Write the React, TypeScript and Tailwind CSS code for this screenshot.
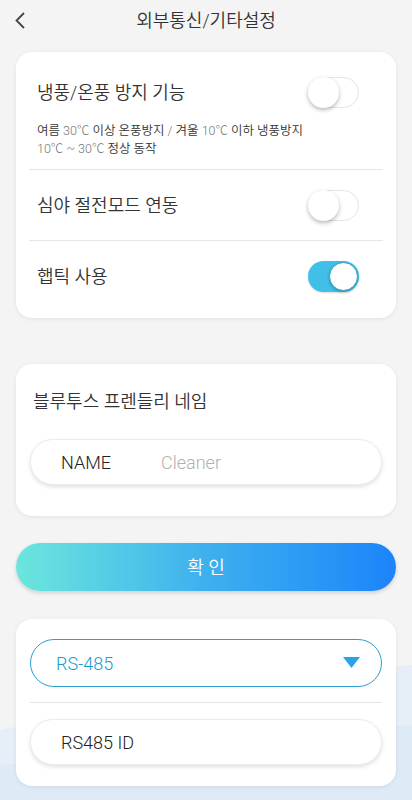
import React from "react";

const KR = { fontFamily: 'Roboto, "Noto Sans CJK KR", sans-serif' };

function Toggle({ on }: { on: boolean }) {
  if (on) {
    return (
      <div className="relative h-[31px] w-[51px] rounded-full bg-[#41bfe6] shadow-[0_1px_2px_rgba(0,0,0,0.15)]">
        <div className="absolute right-[1px] top-[1px] h-[29px] w-[29px] rounded-full border border-[#2e9fbf] bg-white shadow-[0_1px_3px_rgba(0,0,0,0.25)]" />
      </div>
    );
  }
  return (
    <div className="relative h-[31px] w-[51px] rounded-full border border-[#e4e4e4] bg-white">
      <div className="absolute left-[-1px] top-[-1px] h-[31px] w-[31px] rounded-full bg-white shadow-[0_2px_4px_rgba(0,0,0,0.28)]" />
    </div>
  );
}

export default function App() {
  return (
    <div className="relative min-h-[800px] w-[412px] overflow-hidden bg-[#f4f4f4]" style={KR}>
      <svg className="absolute bottom-0 left-0" width="412" height="140" viewBox="0 0 412 140">
        <path d="M0 70 C 120 45, 260 15, 412 5 L412 140 L0 140 Z" fill="#e6eff8" />
        <path d="M0 105 C 140 90, 280 75, 412 65 L412 140 L0 140 Z" fill="#deeaf6" />
      </svg>

      <div className="relative flex flex-col">
        {/* header */}
        <div className="relative flex h-[40px] items-center justify-center">
          <svg className="absolute left-[14px] top-[12px]" width="12" height="17" viewBox="0 0 12 17">
            <path d="M10 1 L2.5 8.5 L10 16" fill="none" stroke="#444" strokeWidth="1.8" />
          </svg>
          <span className="text-[18px] font-[350] text-[#333]">외부통신/기타설정</span>
        </div>

        {/* card 1 */}
        <div className="mx-4 mt-[12px] rounded-[16px] bg-white px-[13px] pb-[7px] shadow-[0_1px_4px_rgba(0,0,0,0.08)]">
          <div className="pl-2 pr-6 pt-[25px] pb-[11px]">
            <div className="flex h-[30px] items-center justify-between">
              <span className="text-[18px] font-[350] text-[#333]">냉풍/온풍 방지 기능</span>
              <Toggle on={false} />
            </div>
            <div className="mt-[15px] text-[12.5px] font-[350] leading-[18px] text-[#333]">
              <div>
                여름 <span className="font-light text-[#777]">30℃</span> 이상 온풍방지{" "}
                <span className="font-light text-[#777]">/</span> 겨울{" "}
                <span className="font-light text-[#777]">10℃</span> 이하 냉풍방지
              </div>
              <div>
                <span className="font-light text-[#777]">10℃ ~ 30℃</span> 정상 동작
              </div>
            </div>
          </div>
          <div className="h-px bg-[#e6e6e6]" />
          <div className="flex h-[70px] items-center justify-between pl-2 pr-6">
            <span className="text-[18px] font-[350] text-[#333]">심야 절전모드 연동</span>
            <Toggle on={false} />
          </div>
          <div className="h-px bg-[#e6e6e6]" />
          <div className="flex h-[70px] items-center justify-between pl-2 pr-6">
            <span className="text-[18px] font-[350] text-[#333]">햅틱 사용</span>
            <Toggle on={true} />
          </div>
        </div>

        {/* card 2 */}
        <div className="mx-4 mt-[46px] rounded-[16px] bg-white px-[14px] pb-[31px] pt-[27px] shadow-[0_1px_4px_rgba(0,0,0,0.08)]">
          <div className="pl-[3px] text-[18px] font-[350] leading-[22px] text-[#333]">블루투스 프렌들리 네임</div>
          <div className="mt-[26px] flex h-[46px] items-center rounded-full border border-[#ececec] bg-white pl-[30px] shadow-[0_2px_4px_rgba(0,0,0,0.12)]">
            <span className="w-[100px] text-[18px] font-light text-[#222]">NAME</span>
            <span className="text-[18px] font-light text-[#b0b0b0]">Cleaner</span>
          </div>
        </div>

        {/* button */}
        <div className="mx-4 mt-[27px] flex h-[48px] items-center justify-center rounded-full bg-gradient-to-r from-[#6ce6dc] via-[#3eb0ee] to-[#1d84fa] shadow-[0_2px_4px_rgba(0,0,0,0.15)]">
          <span className="text-[18px] font-[350] text-white">확 인</span>
        </div>

        {/* card 3 */}
        <div className="mx-4 mt-[28px] rounded-[16px] bg-white px-[14px] pb-[21px] pt-[20px] shadow-[0_1px_4px_rgba(0,0,0,0.08)]">
          <div className="flex h-[48px] items-center justify-between rounded-full border border-[#2a9fd0] pl-[25px] pr-[21px]">
            <span className="text-[18px] font-light text-[#1a9bd6]">RS-485</span>
            <svg width="17" height="12" viewBox="0 0 17 12">
              <path d="M0 0 L17 0 L8.5 11 Z" fill="#26a4ea" />
            </svg>
          </div>
          <div className="mb-[16px] mt-[15px] h-px bg-[#e6e6e6]" />
          <div className="flex h-[46px] items-center rounded-full border border-[#ececec] bg-white pl-[30px] shadow-[0_2px_4px_rgba(0,0,0,0.12)]">
            <span className="text-[18px] font-light text-[#222]">RS485 ID</span>
          </div>
        </div>
      </div>
    </div>
  );
}
